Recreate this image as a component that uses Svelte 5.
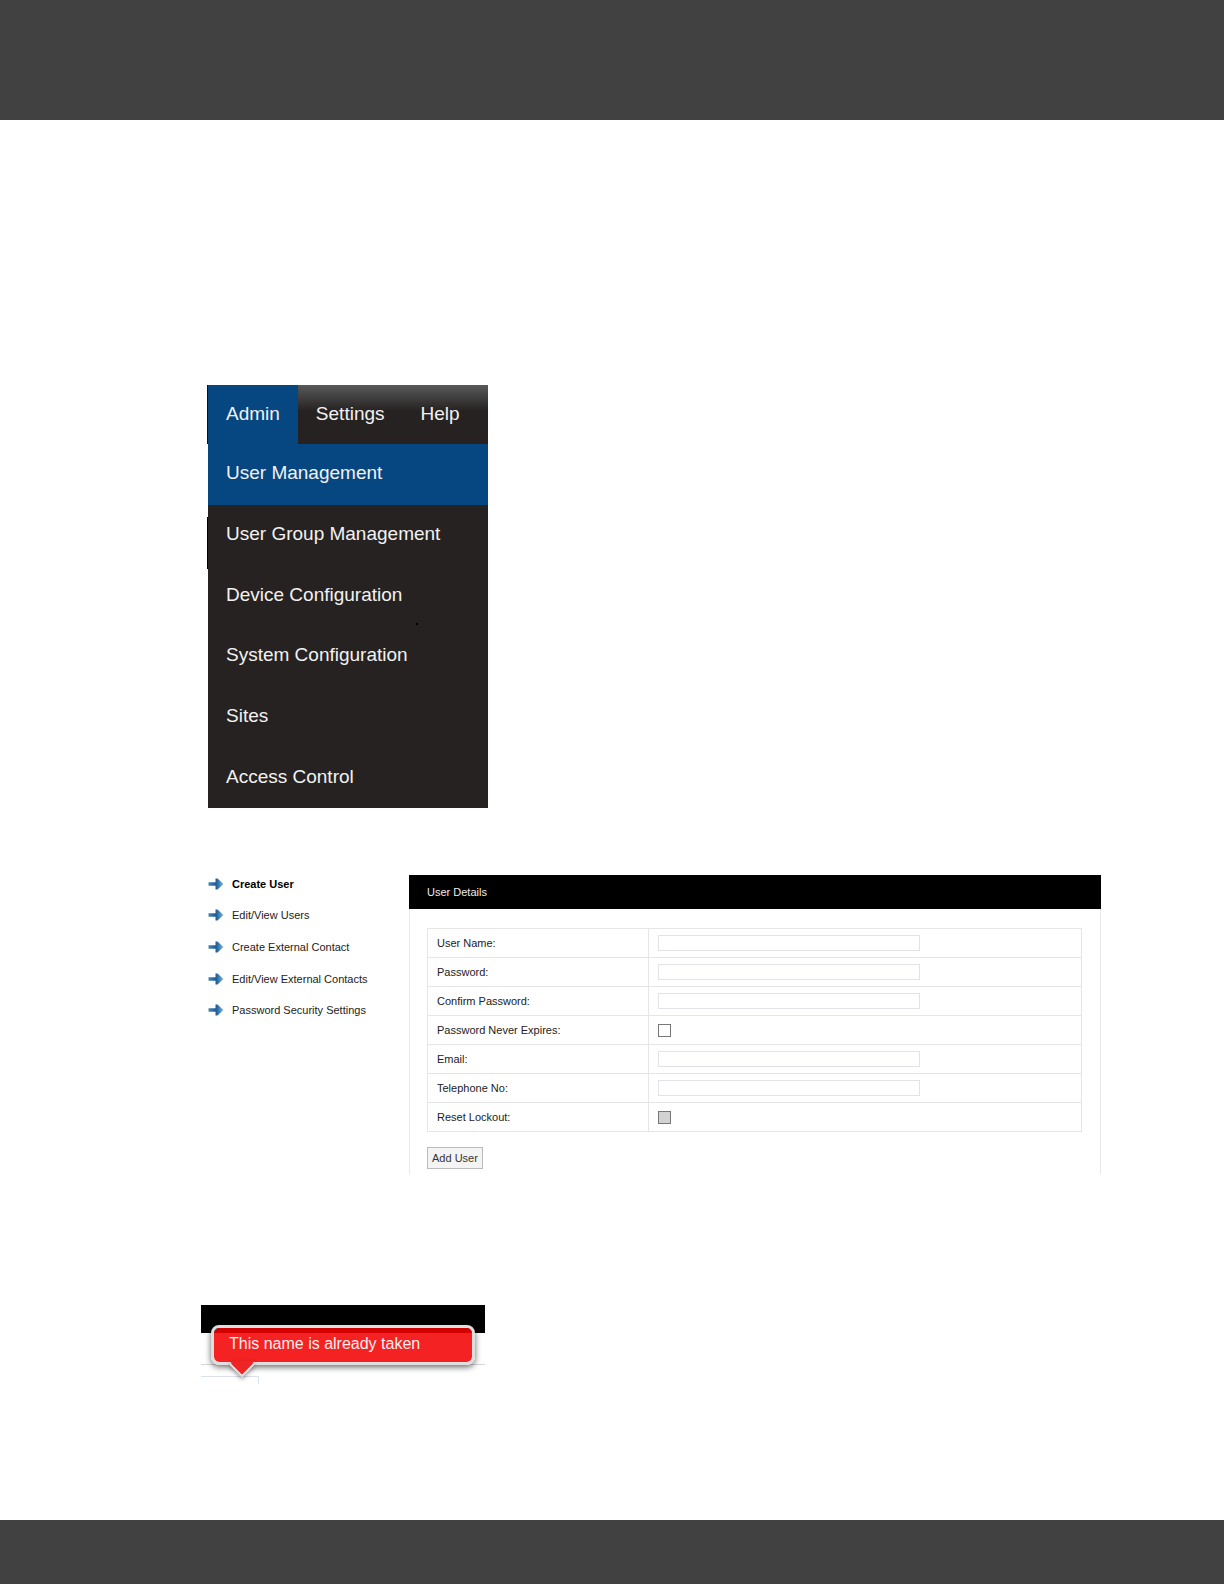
<script lang="ts">
  interface Field {
    id: string;
    label: string;
    type: string;
    disabled?: boolean;
  }

  const tabs = ["Admin", "Settings", "Help"];

  const menuItems = [
    "User Management",
    "User Group Management",
    "Device Configuration",
    "System Configuration",
    "Sites",
    "Access Control",
  ];

  const sideLinks = [
    "Create User",
    "Edit/View Users",
    "Create External Contact",
    "Edit/View External Contacts",
    "Password Security Settings",
  ];

  const fields: Field[] = [
    { id: "username", label: "User Name:", type: "text" },
    { id: "password", label: "Password:", type: "password" },
    { id: "confirm", label: "Confirm Password:", type: "password" },
    { id: "never-expires", label: "Password Never Expires:", type: "checkbox" },
    { id: "email", label: "Email:", type: "text" },
    { id: "telephone", label: "Telephone No:", type: "text" },
    { id: "reset-lockout", label: "Reset Lockout:", type: "checkbox", disabled: true },
  ];
</script>

<div class="page">
  <header class="band top"></header>

  <main>
    <nav class="menu">
      <div class="tabs">
        {#each tabs as tab, i}
          <a href="#{tab.toLowerCase()}" class:active={i === 0}>{tab}</a>
        {/each}
      </div>
      <ul>
        {#each menuItems as item, i}
          <li class:active={i === 0} class:edge={i === 1} class:dot={i === 2}>
            <a href="#item-{i}">{item}</a>
          </li>
        {/each}
      </ul>
    </nav>

    <section class="users">
      <ul class="side">
        {#each sideLinks as link, i}
          <li class:current={i === 0}>
            <svg width="16" height="12" viewBox="0 0 16 12" aria-hidden="true">
              <defs>
                <linearGradient id="arrow-{i}" x1="0" x2="1" y1="0" y2="0">
                  <stop offset="0" stop-color="#4d86b2" />
                  <stop offset="0.5" stop-color="#1d5c94" />
                  <stop offset="0.7" stop-color="#3d7fb5" />
                  <stop offset="1" stop-color="#8dbbdd" />
                </linearGradient>
              </defs>
              <path d="M0.5 4.2H7.5V0.5H9.5L15.5 6L9.5 11.5H7.5V7.8H0.5Z" fill="url(#arrow-{i})" />
            </svg>
            <a href="#user-{i}">{link}</a>
          </li>
        {/each}
      </ul>

      <form class="panel" onsubmit={(e) => e.preventDefault()}>
        <h2>User Details</h2>
        <div class="panel-body">
          <table>
            <tbody>
              {#each fields as field}
                <tr>
                  <th scope="row"><label for={field.id}>{field.label}</label></th>
                  <td><input id={field.id} type={field.type} disabled={field.disabled} /></td>
                </tr>
              {/each}
            </tbody>
          </table>
          <button type="submit">Add User</button>
        </div>
      </form>
    </section>

    <section class="taken">
      <div class="bar"></div>
      <div class="strip"></div>
      <input type="text" aria-label="User name" />
      <div class="tooltip" role="alert">
        This name is already taken
        <svg width="28" height="20" viewBox="0 0 28 20" aria-hidden="true">
          <path d="M2 3L14 15L26 3" fill="#ec2a2a" stroke="#dedede" stroke-width="2" />
          <path d="M3 0H25V2L14 13L3 2Z" fill="#ef2424" />
        </svg>
      </div>
    </section>
  </main>

  <footer class="band bottom"></footer>
</div>

<style>
  :global(body) {
    margin: 0;
    background: #fff;
  }

  .page {
    display: flex;
    flex-direction: column;
    min-height: 100vh;
    font-family: "Liberation Sans", Arial, sans-serif;
  }

  .band {
    background: #414141;
  }
  .top {
    height: 120px;
  }
  .bottom {
    height: 64px;
  }

  main {
    flex: 1;
    padding: 265px 123px 0 201px;
  }

  ul {
    list-style: none;
    margin: 0;
    padding: 0;
  }
  a {
    color: inherit;
    text-decoration: none;
  }

  /* drop-down menu */
  .menu {
    width: 281px;
    margin-left: 6px;
    color: #f2f2f2;
    font-size: 19px;
    line-height: 22px;
  }
  .tabs {
    display: flex;
    border-left: 1px solid #111;
    background: linear-gradient(#58595a, #262221 26px);
  }
  .tabs a {
    padding: 18px 18px 19px;
  }
  .menu .active {
    background: #064681;
  }
  .menu ul {
    display: grid;
    grid-auto-rows: 1fr;
    min-height: 364px;
  }
  .menu li {
    position: relative;
    display: flex;
    align-items: center;
    margin-left: 1px;
    padding: 0 18px 2px;
    background: #262221;
  }
  .edge::before {
    content: "";
    position: absolute;
    left: -1px;
    top: 12px;
    width: 1px;
    height: 52px;
    background: #000;
  }
  .dot::after {
    content: "";
    position: absolute;
    right: 70px;
    bottom: 1px;
    width: 2px;
    height: 2px;
    background: #000;
  }

  /* user administration */
  .users {
    display: flex;
    align-items: flex-start;
    margin-top: 67px;
    color: #222;
    font-size: 11px;
    line-height: 14px;
  }
  .side {
    display: grid;
    grid-auto-rows: 1fr;
    flex: 0 0 201px;
    min-height: 158px;
    margin-top: -7px;
    padding-left: 7px;
    box-sizing: border-box;
  }
  .side li {
    display: flex;
    align-items: center;
    gap: 8px;
  }
  .side .current {
    color: #000;
    font-weight: bold;
  }
  .panel {
    flex: 1;
    margin-left: 7px;
  }
  h2 {
    margin: 0;
    padding: 10px 18px;
    background: #000;
    color: #eee;
    font-size: 11px;
    font-weight: normal;
    line-height: 14px;
  }
  .panel-body {
    padding: 19px 18px 5px 17px;
    border: solid #e9e9e9;
    border-width: 0 1px;
  }
  table {
    width: 100%;
    border-collapse: collapse;
  }
  th,
  td {
    height: 28px;
    padding: 0 9px;
    border: 1px solid #e6e6e6;
    text-align: left;
    font-weight: normal;
  }
  th {
    width: 202px;
  }
  td input {
    display: block;
    box-sizing: border-box;
    width: 262px;
    height: 16px;
    margin: 0;
    padding: 0 2px;
    border: 1px solid #e2e2ea;
    background: #fff;
    font: inherit;
  }
  td input[type="checkbox"] {
    appearance: none;
    width: 13px;
    height: 13px;
    border-color: #777;
  }
  td input:disabled {
    background: #d2d2d2;
  }
  button {
    display: block;
    margin-top: 15px;
    padding: 3px 4px;
    border: 1px solid #bbb;
    border-radius: 0;
    background: #f4f4f4;
    color: #333;
    font: 11px/14px "Liberation Sans", Arial, sans-serif;
  }

  /* validation message */
  .taken {
    position: relative;
    width: 284px;
    margin-top: 131px;
  }
  .bar {
    height: 28px;
    background: #000;
  }
  .strip {
    height: 31px;
    border-bottom: 1px solid #d8d8d8;
  }
  .taken input {
    display: block;
    box-sizing: border-box;
    width: 58px;
    height: 8px;
    margin: 11px 0 0;
    padding: 0;
    border: solid #dbe1ef;
    border-width: 1px 1px 0 0;
    border-radius: 0;
  }
  .tooltip {
    position: absolute;
    top: 20px;
    left: 10px;
    right: 10px;
    padding: 7px 15px 9px;
    border: 3px solid #dedede;
    border-radius: 8px;
    background: rgba(242, 0, 0, 0.867) padding-box;
    box-shadow: 0 2px 6px rgba(0, 0, 0, 0.6);
    color: #fff0f0;
    font-size: 16px;
    line-height: 18px;
  }
  .tooltip svg {
    position: absolute;
    left: 14px;
    top: 33px;
    filter: drop-shadow(0 2px 2px rgba(0, 0, 0, 0.4));
  }
</style>
